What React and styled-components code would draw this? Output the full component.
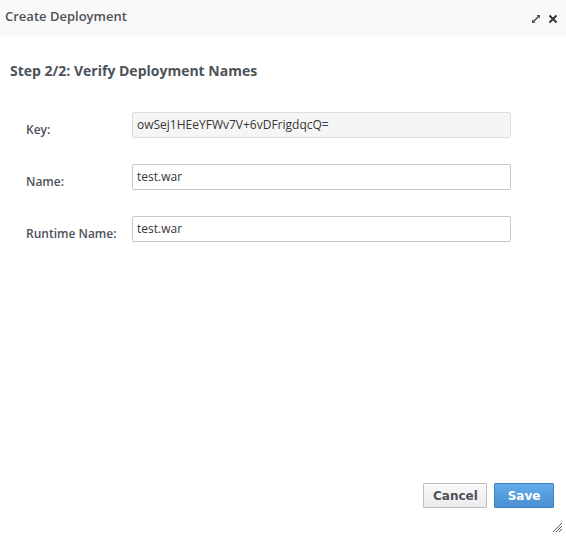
import React from 'react';
import styled, { createGlobalStyle } from 'styled-components';

const Global = createGlobalStyle`
    html, body {
        margin: 0;
        padding: 0;
        background: #fff;
    }
    body {
        font-family: "Open Sans", "Liberation Sans", sans-serif;
        color: #4d5258;
    }
`

const Dialog = styled.div`
    width: 566px;
    height: 536px;
    display: flex;
    flex-direction: column;
    background: #fff;
    position: relative;
    overflow: hidden;
`

const Header = styled.div`
    height: 36px;
    flex: none;
    background: #f9f9f9;
    display: flex;
    align-items: center;
    justify-content: space-between;
    padding: 0 8px 0 5px;
    box-sizing: border-box;
`

const Title = styled.div`
    font-size: 13px;
    font-weight: 600;
    color: #4d5258;
    margin-top: -5px;
`

const Tools = styled.div`
    display: flex;
    align-items: center;
    gap: 7px;
    margin-top: 1px;
`

const Body = styled.div`
    flex: 1;
    padding: 26px 10px 0;
    display: flex;
    flex-direction: column;
`

const Heading = styled.h2`
    margin: 0 0 32px;
    font-size: 14px;
    font-weight: 700;
    color: #4d5258;
    line-height: 18px;
`

const Form = styled.div`
    display: flex;
    flex-direction: column;
    gap: 26px;
    padding-left: 16px;
`

const Row = styled.div`
    display: flex;
    align-items: flex-end;
`

const Label = styled.div`
    width: 106px;
    font-size: 12px;
    font-weight: 600;
    color: #4d5258;
    line-height: 16px;
    margin-bottom: 0;
`

const Field = styled.div`
    width: 379px;
    height: 26px;
    box-sizing: border-box;
    border: 1px solid ${p => (p.readOnly ? '#dcdcdc' : '#c8c8c8')};
    border-radius: 2px;
    background: ${p => (p.readOnly ? '#f5f5f5' : '#fff')};
    font-size: 12px;
    color: #363636;
    padding: 4px 4px 0;
    line-height: 16px;
`

const Footer = styled.div`
    display: flex;
    justify-content: flex-end;
    gap: 7px;
    padding: 0 12px 28px 0;
`

const Button = styled.button`
    height: 25px;
    box-sizing: border-box;
    padding: 1px 9px 0;
    font-family: "DejaVu Sans", Verdana, sans-serif;
    font-size: 12px;
    font-weight: 700;
    border-radius: 1px;
    border: 1px solid ${p => (p.primary ? '#3d80bd' : '#bdbdbd')};
    color: ${p => (p.primary ? '#fff' : '#4d5258')};
    background: ${p => (p.primary
        ? 'linear-gradient(#63abea, #4a90d2)'
        : 'linear-gradient(#f9f9f9, #ececec)')};
    width: ${p => p.w}px;
`

const Grip = styled.svg`
    position: absolute;
    right: 3px;
    bottom: 3px;
`

export default function App() {
    return (
        <Dialog>
            <Global />
            <Header>
                <Title>Create Deployment</Title>
                <Tools>
                    <svg width="10" height="10" viewBox="0 0 10 10">
                        <path d="M1.5 8.5 L8.5 1.5" stroke="#4d5258" strokeWidth="1.6" />
                        <path d="M5.5 1 H9 V4.5 Z" fill="#4d5258" />
                        <path d="M1 5.5 V9 H4.5 Z" fill="#4d5258" />
                    </svg>
                    <svg width="10" height="10" viewBox="0 0 10 10">
                        <path d="M1.5 1.5 L8.5 8.5 M8.5 1.5 L1.5 8.5" stroke="#363636" strokeWidth="2" />
                    </svg>
                </Tools>
            </Header>
            <Body>
                <Heading>Step 2/2: Verify Deployment Names</Heading>
                <Form>
                    <Row>
                        <Label>Key:</Label>
                        <Field readOnly>owSej1HEeYFWv7V+6vDFrigdqcQ=</Field>
                    </Row>
                    <Row>
                        <Label>Name:</Label>
                        <Field>test.war</Field>
                    </Row>
                    <Row>
                        <Label>Runtime Name:</Label>
                        <Field>test.war</Field>
                    </Row>
                </Form>
            </Body>
            <Footer>
                <Button w={64}>Cancel</Button>
                <Button primary w={60}>Save</Button>
            </Footer>
            <Grip width="11" height="11" viewBox="0 0 11 11">
                <path d="M1 10 L10 1 M4 10 L10 4 M7 10 L10 7" stroke="#555" strokeWidth="1" />
            </Grip>
        </Dialog>
    );
}
